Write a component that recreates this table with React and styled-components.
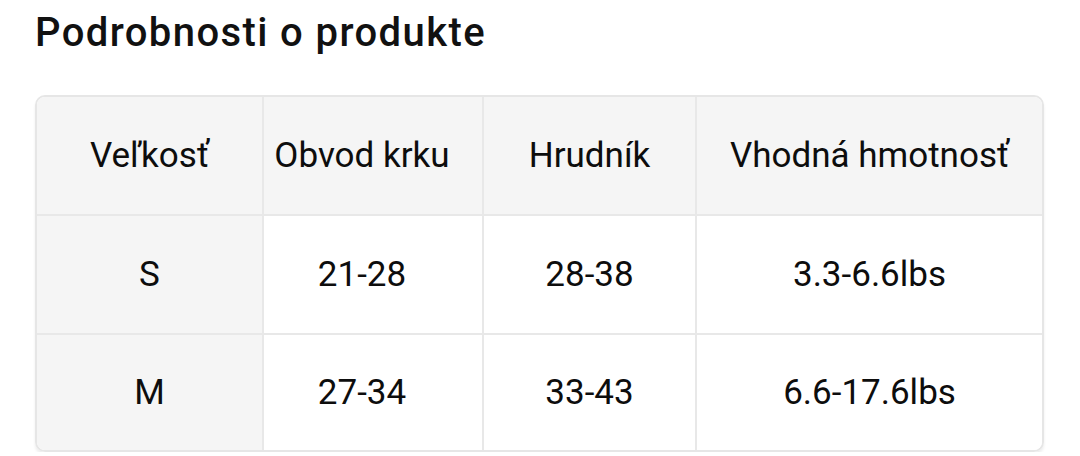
import React from "react";
import styled, { createGlobalStyle } from "styled-components";

const Global = createGlobalStyle`
  html, body { margin: 0; padding: 0; background: #ffffff; }
  body { font-family: Roboto, "Noto Sans", Arial, sans-serif; color: #111; }
`;

const Page = styled.div`
  padding: 9px 36px 0 35px;
  width: 1080px;
  box-sizing: border-box;
`;

const Title = styled.h1`
  margin: 0 0 38px 0;
  font-size: 40px;
  font-weight: 500;
  letter-spacing: 1.4px;
  line-height: 48px;
  color: #111;
`;

const Table = styled.div`
  display: grid;
  grid-template-columns: 227px 220px 213px 1fr;
  border: 2px solid #e6e6e6;
  border-radius: 10px;
  overflow: hidden;
  box-shadow: 0 3px 3px rgba(0, 0, 0, 0.07);
`;

const Cell = styled.div`
  height: ${(p) => (p.$lastRow ? "115px" : "119px")};
  box-sizing: border-box;
  display: flex;
  align-items: center;
  justify-content: center;
  text-align: center;
  padding-right: ${(p) => (p.$nudge ? "22px" : "0")};
  font-size: 35px;
  font-weight: 400;
  color: #0d0d0d;
  background: ${(p) => (p.$shaded ? "#f5f5f5" : "#ffffff")};
  border-right: ${(p) => (p.$lastCol ? "none" : "2px solid #e8e8e8")};
  border-bottom: ${(p) => (p.$lastRow ? "none" : "2px solid #e8e8e8")};
`;

const header = ["Veľkosť", "Obvod krku", "Hrudník", "Vhodná hmotnosť"];
const rows = [
  ["S", "21-28", "28-38", "3.3-6.6lbs"],
  ["M", "27-34", "33-43", "6.6-17.6lbs"],
];

export default function App() {
  const all = [header, ...rows];
  return (
    <>
      <Global />
      <Page>
        <Title>Podrobnosti o produkte</Title>
        <Table>
          {all.map((row, r) =>
            row.map((txt, c) => (
              <Cell
                key={`${r}-${c}`}
                $shaded={r === 0 || c === 0}
                $nudge={c === 1}
                $lastCol={c === row.length - 1}
                $lastRow={r === all.length - 1}
              >
                {txt}
              </Cell>
            ))
          )}
        </Table>
      </Page>
    </>
  );
}
